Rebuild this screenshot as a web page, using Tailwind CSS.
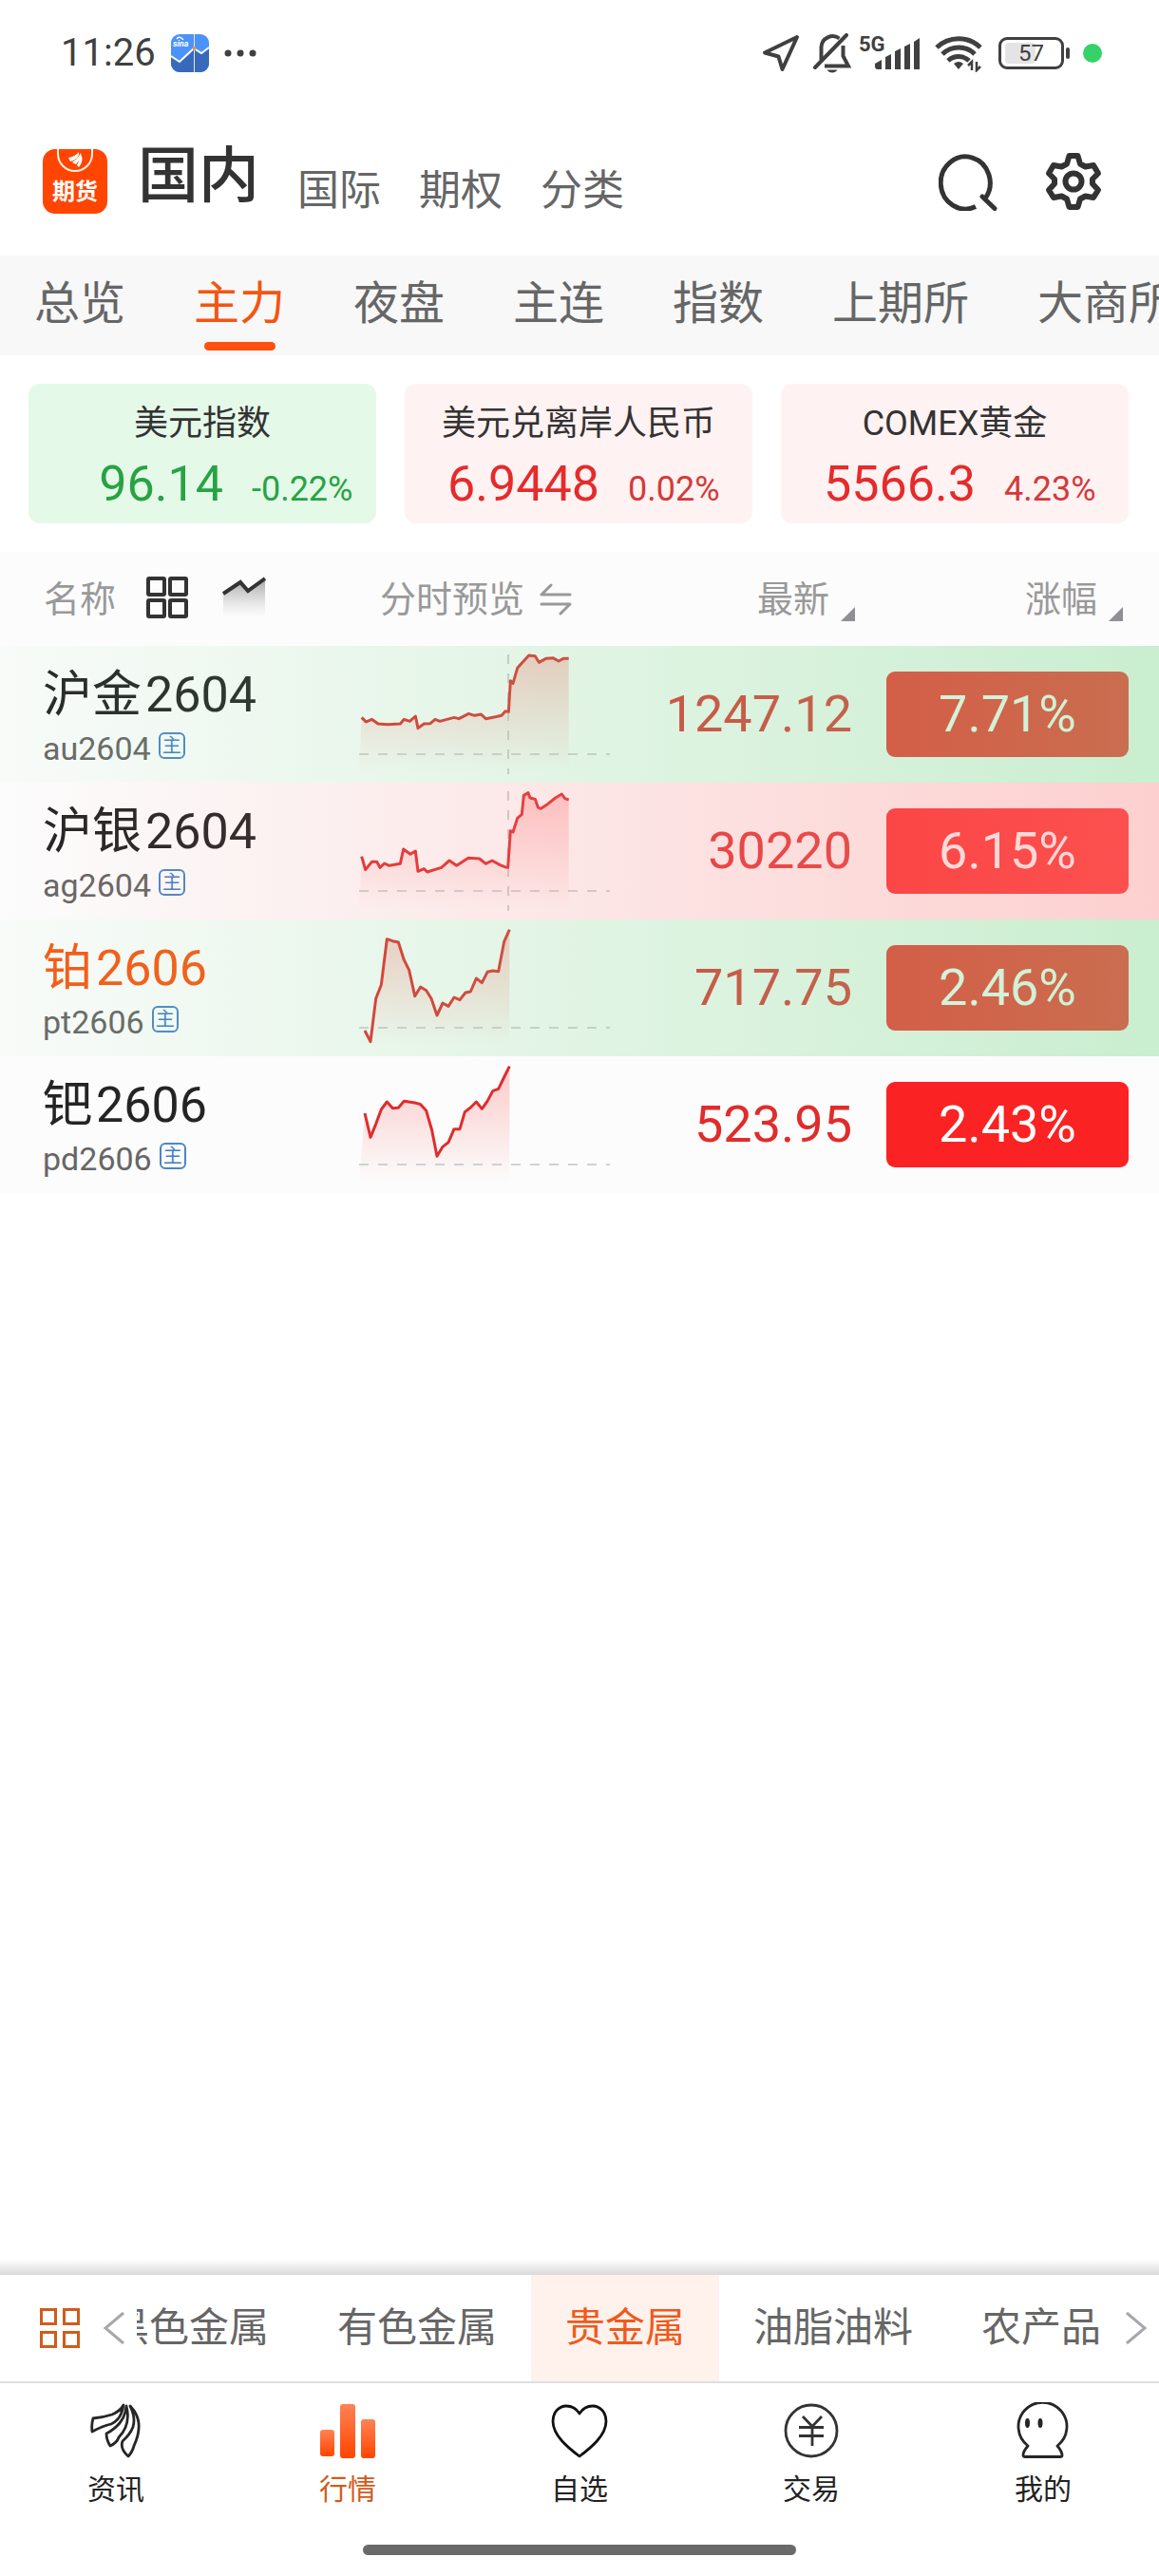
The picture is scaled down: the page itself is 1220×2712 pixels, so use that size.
<!DOCTYPE html>
<html lang="zh-CN">
<head>
<meta charset="utf-8">
<meta name="viewport" content="width=device-width, initial-scale=1">
<title>期货行情</title>
<script src="https://cdn.jsdelivr.net/npm/@tailwindcss/browser@4"></script>
</head>
<body class="flex min-h-screen flex-col overflow-x-hidden bg-white font-[Roboto,'Noto_Sans_CJK_SC',sans-serif] text-[#333]">

<!-- Status bar -->
<div class="flex h-28 items-center pr-[60px] pl-16 text-[#404040]">
  <time class="w-[100px] text-[40px] leading-none">11:26</time>
  <svg class="ml-4 size-10" viewBox="0 0 40 40" aria-hidden="true">
    <rect width="40" height="40" rx="9" fill="#4c92fb"/>
    <path d="M0 23l9 6 15-14 8 5 8-6v17a9 9 0 0 1-9 9H9a9 9 0 0 1-9-9z" fill="#3769bd"/>
    <path d="M0 23l9 6 15-14 8 5 8-6" fill="none" stroke="#fff" stroke-width="2"/>
    <path d="M24.500 0v40" stroke="#f0e6c0" stroke-width="1"/>
    <circle cx="24.500" cy="15" r="2" fill="#e09a3c"/>
    <text x="2" y="13" font-size="9" font-weight="700" font-style="italic" fill="#fff">sina</text>
    <path d="M6 5q2-3 5-1l2 2" fill="none" stroke="#fff" stroke-width="1.500"/>
  </svg>
  <svg class="ml-4 h-2 w-9" viewBox="0 0 36 8" fill="#404040" aria-hidden="true"><circle cx="4" cy="4" r="3.500"/><circle cx="17" cy="4" r="3.500"/><circle cx="30" cy="4" r="3.500"/></svg>
  <div class="ml-auto flex items-center">
    <svg class="size-10" viewBox="0 0 40 40" fill="none" stroke="#404040" stroke-width="4" stroke-linejoin="round" aria-label="定位"><path d="M37 3L3 19.500l14.500 4L21.500 37z"/></svg>
    <svg class="ml-3.5 h-[42px] w-10" viewBox="0 0 40 42" fill="none" stroke="#404040" stroke-width="4" aria-label="静音"><path d="M8.500 28V14.500a12 12 0 0 1 19-9M31.500 13v11l5.500 10.500H12"/><path d="M2 36L35 2" stroke-linecap="round"/><path d="M14.500 38.500h11q-2 3-5.500 3t-5.500-3z" fill="#404040" stroke="none"/></svg>
    <svg class="ml-2 h-9 w-[68px]" viewBox="0 0 68 36" fill="#404040" aria-label="5G"><text x="0" y="16" font-size="22" font-weight="700">5G</text><path d="M17 29l7-4v10h-4a3 3 0 0 1-3-3zM28 22l6-3v16h-6zM38 16l6-3v22h-6zM48 11l6-3v27h-6zM58 6l6-4v33h-6z"/></svg>
    <svg class="ml-3 h-10 w-[51px]" viewBox="0 0 51 40" fill="none" stroke="#404040" stroke-width="5" aria-label="WLAN"><path d="M2 14a33 33 0 0 1 46 0M8 21a24 24 0 0 1 34 0M14 28a16 16 0 0 1 22 0"/><path d="M20 31q5-4 10 0l-5 6z" fill="#404040" stroke="none"/><path d="M39 38V29l-4 4M44 29v9l4-4" stroke-width="2.500"/></svg>
    <div class="ml-4 flex items-center" aria-label="电量 57%">
      <div class="relative h-[34px] w-[69px] overflow-hidden rounded-[9px] border-[3px] border-[#404040]">
        <div class="absolute inset-y-[3px] left-[4px] w-8 rounded-sm bg-[#e4e4e4]"></div>
        <span class="absolute inset-0 text-center text-2xl leading-7">57</span>
      </div>
      <i class="ml-[2px] h-3 w-1 rounded-full bg-[#404040]"></i>
    </div>
    <i class="ml-[14px] size-5 rounded-full bg-[#37d267]"></i>
  </div>
</div>

<!-- Market switcher -->
<header class="flex h-[157px] items-center pr-[60px] pl-[45px]">
  <svg class="size-[68px]" viewBox="0 0 68 68" aria-label="期货">
    <rect width="68" height="68" rx="13" fill="#ff4500"/>
    <path d="M16 0v5a18 18 0 0 0 36 0V0" fill="none" stroke="#fff3e8" stroke-width="2"/>
    <path d="M27 9Q34 8 38 3L38 6Q35 12 29 13zM31 14Q37 10 40 4l1 5-6 7zM36 17l5-10q2 6-3 12z" fill="#fff"/>
    <text x="34" y="53" text-anchor="middle" font-size="24" font-weight="700" fill="#fff" font-family="Noto Sans CJK SC">期货</text>
  </svg>
  <nav class="mb-1 ml-8 flex items-end gap-10 text-[44px] leading-none text-[#666]">
    <a href="#" aria-current="page" class="pb-[5px] text-[64px] leading-none font-medium text-[#333]">国内</a>
    <a href="#">国际</a>
    <a href="#">期权</a>
    <a href="#">分类</a>
  </nav>
  <div class="ml-auto flex gap-[50px]">
    <button aria-label="搜索"><svg class="size-[62px]" viewBox="0 0 62 62" fill="none" stroke="#333" stroke-width="5"><path d="M39 57.500a26 27.500 0 1 1 10-8.500" stroke-linejoin="round"/><path d="M46 47l13 12.500" stroke-linecap="round"/></svg></button>
    <button aria-label="设置"><svg class="size-[60px]" viewBox="0 0 60 60" fill="none" stroke="#333" stroke-width="6" stroke-linejoin="round"><path d="M25.500 3h9L37 11.500l5.500 3L51 13l5 8.500-6 6v5l6 6.500-5 8-8.500-1.500-5.500 3L34.500 57h-9L23 48.500l-5.500-3L9 47l-5-8 6-6.500v-5l-6-6L9 13l8.500 1.500 5.500-3z"/><circle cx="30" cy="30" r="8.500"/></svg></button>
  </div>
</header>

<!-- Exchange tabs -->
<nav class="flex h-[105px] gap-[72px] overflow-hidden bg-[#f8f8f8] pl-9 text-5xl leading-[102px] whitespace-nowrap text-[#666]">
  <a href="#" class="shrink-0">总览</a>
  <a href="#" aria-current="page" class="relative shrink-0 text-[#f4550f]">主力<i class="absolute bottom-[5px] left-[11px] h-[9px] w-[75px] rounded-full bg-[#ff500e]"></i></a>
  <a href="#" class="shrink-0">夜盘</a>
  <a href="#" class="shrink-0">主连</a>
  <a href="#" class="shrink-0">指数</a>
  <a href="#" class="shrink-0">上期所</a>
  <a href="#" class="shrink-0">大商所</a>
</nav>

<main class="flex-1">
  <!-- Index cards -->
  <section class="grid grid-cols-3 gap-[30px] py-[30px] pr-8 pl-[30px]">
    <a href="#" class="rounded-xl bg-[#e5f9e9] pt-5 pb-[11px] text-[#27a343]">
      <h2 class="text-center text-4xl leading-[44px] text-[#333]">美元指数</h2>
      <p class="mt-3 flex h-[60px] items-baseline gap-[30px]"><b class="w-[56%] text-right text-[52px] leading-[60px] font-normal">96.14</b><span class="text-4xl leading-[44px]">-0.22%</span></p>
    </a>
    <a href="#" class="rounded-xl bg-[#fff2f2] pt-5 pb-[11px] text-[#e52b2b]">
      <h2 class="text-center text-4xl leading-[44px] text-[#333]">美元兑离岸人民币</h2>
      <p class="mt-3 flex h-[60px] items-baseline gap-[30px]"><b class="w-[56%] text-right text-[52px] leading-[60px] font-normal">6.9448</b><span class="text-4xl leading-[44px] text-[#d33a3a]">0.02%</span></p>
    </a>
    <a href="#" class="rounded-xl bg-[#fff2f2] pt-5 pb-[11px] text-[#e52b2b]">
      <h2 class="text-center text-4xl leading-[44px] text-[#333]">COMEX黄金</h2>
      <p class="mt-3 flex h-[60px] items-baseline gap-[30px]"><b class="w-[56%] text-right text-[52px] leading-[60px] font-normal">5566.3</b><span class="text-4xl leading-[44px] text-[#d33a3a]">4.23%</span></p>
    </a>
  </section>

  <!-- Shared fill for the intraday charts -->
  <svg class="absolute size-0" aria-hidden="true"><defs><linearGradient id="fade" gradientUnits="userSpaceOnUse" x1="0" y1="0" x2="0" y2="400"><stop offset="0" stop-color="#ff2020" stop-opacity=".25"/><stop offset="1" stop-color="#ff2020" stop-opacity="0"/></linearGradient></defs></svg>

  <table class="w-full table-fixed bg-[#fcfcfc]">
    <colgroup><col class="w-[378px]"><col class="w-[264px]"><col><col class="w-[305px]"></colgroup>
    <thead>
      <tr class="h-[99px] text-[38px] leading-none text-[#999]">
        <th class="p-0 pl-[46px] font-normal">
          <div class="flex items-center"><span>名称</span>
            <button class="mb-1 ml-8" aria-label="宫格"><svg class="size-11" viewBox="0 0 44 44" fill="none" stroke="#333" stroke-width="4"><rect x="2" y="2" width="17" height="17" rx="1"/><rect x="25" y="2" width="17" height="17" rx="1"/><rect x="2" y="25" width="17" height="17" rx="1"/><rect x="25" y="25" width="17" height="17" rx="1"/></svg></button>
            <button class="mb-1 ml-9" aria-label="走势"><svg class="h-11 w-[46px]" viewBox="0 0 46 44"><defs><linearGradient id="g" x2="0" y2="1"><stop stop-color="#999" stop-opacity=".9"/><stop offset="1" stop-color="#ccc" stop-opacity="0"/></linearGradient></defs><path d="M1 18L19 6l8 9L45 2v41H1z" fill="url(#g)"/><path d="M1 18L19 6l8 9L45 2" fill="none" stroke="#333" stroke-width="4"/></svg></button>
          </div>
        </th>
        <th class="p-0 pl-[22px] font-normal"><div class="flex items-center gap-4 whitespace-nowrap">分时预览<svg class="h-[34px] w-[34px]" viewBox="0 0 34 34" fill="none" stroke="#999" stroke-width="3" stroke-linecap="round" stroke-linejoin="round"><path d="M12 2L2 12h30M2 22h30L22 32"/></svg></div></th>
        <th class="p-0 pr-[15px] font-normal"><div class="flex items-end justify-end gap-3">最新<svg class="size-[15px] translate-y-1" viewBox="0 0 15 15"><path d="M15 0v15H0z" fill="#8f8f94"/></svg></div></th>
        <th class="p-0 pr-[38px] font-normal"><div class="flex items-end justify-end gap-3">涨幅<svg class="size-[15px] translate-y-1" viewBox="0 0 15 15"><path d="M15 0v15H0z" fill="#8f8f94"/></svg></div></th>
      </tr>
    </thead>
    <tbody class="text-[54px] leading-none text-[#e02c2c]">
      <tr class="relative h-36">
        <td class="p-0 pt-2 pl-[45px]">
          <div class="text-[52px] leading-[60px] text-[#242424]">沪金<span class="ml-1">2604</span></div>
          <div class="mt-1 flex items-center gap-2 text-[34px] leading-[44px] text-[#666]">au2604<span class="mb-1.5 size-7 rounded-md border-2 border-[#4a86c8] text-center text-xl leading-6 text-[#3f7fc6]">主</span></div>
        </td>
        <td class="p-0"><svg class="block h-36 w-[264px]" viewBox="0 0 792 432" fill="none"><path d="M0 400L8 226 22 240 40 232 60 246 90 248 130 246 142 232 160 238 178 222 186 260 205 246 225 245 240 232 255 238 300 226 315 230 346 214 365 220 385 216 400 230 430 224 450 220 462 206 472 208 478 110 486 118 500 70 512 56 536 30 556 32 568 52 590 40 612 38 630 48 645 40 662 40V400z" fill="url(#fade)"/><path d="M0 342H792M471 27V405" stroke="#c4c4c4" stroke-width="5" stroke-dasharray="30 30"/><path d="M8 226L22 240 40 232 60 246 90 248 130 246 142 232 160 238 178 222 186 260 205 246 225 245 240 232 255 238 300 226 315 230 346 214 365 220 385 216 400 230 430 224 450 220 462 206 472 208 478 110 486 118 500 70 512 56 536 30 556 32 568 52 590 40 612 38 630 48 645 40 662 40" stroke="#e02c2c" stroke-width="9" stroke-linejoin="round"/></svg></td>
        <td class="p-0 pr-[18px] text-right">1247.12</td>
        <td class="p-0 pr-8 pl-[18px]"><button class="block h-[90px] w-full rounded-[9px] bg-[#fa2222] text-center text-white">7.71%</button><i class="pointer-events-none absolute inset-0 bg-[linear-gradient(to_right,rgba(132,218,146,0.03),rgba(132,218,146,0.42))]"></i></td>
      </tr>
      <tr class="relative h-36">
        <td class="p-0 pt-2 pl-[45px]">
          <div class="text-[52px] leading-[60px] text-[#242424]">沪银<span class="ml-1">2604</span></div>
          <div class="mt-1 flex items-center gap-2 text-[34px] leading-[44px] text-[#666]">ag2604<span class="mb-1.5 size-7 rounded-md border-2 border-[#4a86c8] text-center text-xl leading-6 text-[#3f7fc6]">主</span></div>
        </td>
        <td class="p-0"><svg class="block h-36 w-[264px]" viewBox="0 0 792 432" fill="none"><path d="M0 400L8 233 20 275 40 250 56 250 66 268 80 255 95 262 130 256 140 210 162 226 178 216 186 280 205 272 215 282 260 268 285 246 308 262 345 238 380 240 400 256 420 246 445 260 460 266 470 268 478 152 486 156 500 112 514 100 520 40 534 32 540 48 556 52 565 78 574 82 595 68 620 48 640 36 650 50 662 54V400z" fill="url(#fade)"/><path d="M0 342H792M471 27V405" stroke="#c4c4c4" stroke-width="5" stroke-dasharray="30 30"/><path d="M8 233L20 275 40 250 56 250 66 268 80 255 95 262 130 256 140 210 162 226 178 216 186 280 205 272 215 282 260 268 285 246 308 262 345 238 380 240 400 256 420 246 445 260 460 266 470 268 478 152 486 156 500 112 514 100 520 40 534 32 540 48 556 52 565 78 574 82 595 68 620 48 640 36 650 50 662 54" stroke="#e02c2c" stroke-width="9" stroke-linejoin="round"/></svg></td>
        <td class="p-0 pr-[18px] text-right">30220</td>
        <td class="p-0 pr-8 pl-[18px]"><button class="block h-[90px] w-full rounded-[9px] bg-[#fa2222] text-center text-white">6.15%</button><i class="pointer-events-none absolute inset-0 bg-[linear-gradient(to_right,rgba(253,147,145,0),rgba(253,147,145,0.42))]"></i></td>
      </tr>
      <tr class="relative h-36">
        <td class="p-0 pt-2 pl-[45px]">
          <div class="text-[52px] leading-[60px] text-[#fa5712]">铂<span class="ml-1">2606</span></div>
          <div class="mt-1 flex items-center gap-2 text-[34px] leading-[44px] text-[#666]">pt2606<span class="mb-1.5 size-7 rounded-md border-2 border-[#4a86c8] text-center text-xl leading-6 text-[#3f7fc6]">主</span></div>
        </td>
        <td class="p-0"><svg class="block h-36 w-[264px]" viewBox="0 0 792 432" fill="none"><path d="M0 400L18 351 36 386 53 250 70 206 88 62 106 68 124 72 142 128 158 160 176 242 194 213 212 224 228 250 246 303 264 264 282 274 300 246 318 254 336 231 352 228 370 186 388 200 405 166 422 162 440 164 458 70 475 32V400z" fill="url(#fade)"/><path d="M0 342H792" stroke="#c4c4c4" stroke-width="5" stroke-dasharray="30 30"/><path d="M18 351L36 386 53 250 70 206 88 62 106 68 124 72 142 128 158 160 176 242 194 213 212 224 228 250 246 303 264 264 282 274 300 246 318 254 336 231 352 228 370 186 388 200 405 166 422 162 440 164 458 70 475 32" stroke="#e02c2c" stroke-width="9" stroke-linejoin="round"/></svg></td>
        <td class="p-0 pr-[18px] text-right">717.75</td>
        <td class="p-0 pr-8 pl-[18px]"><button class="block h-[90px] w-full rounded-[9px] bg-[#fa2222] text-center text-white">2.46%</button><i class="pointer-events-none absolute inset-0 bg-[linear-gradient(to_right,rgba(132,218,146,0.03),rgba(132,218,146,0.42))]"></i></td>
      </tr>
      <tr class="h-36">
        <td class="p-0 pt-2 pl-[45px]">
          <div class="text-[52px] leading-[60px] text-[#242424]">钯<span class="ml-1">2606</span></div>
          <div class="mt-1 flex items-center gap-2 text-[34px] leading-[44px] text-[#666]">pd2606<span class="mb-1.5 size-7 rounded-md border-2 border-[#4a86c8] text-center text-xl leading-6 text-[#3f7fc6]">主</span></div>
        </td>
        <td class="p-0"><svg class="block h-36 w-[264px]" viewBox="0 0 792 432" fill="none"><path d="M0 400L18 180 36 256 53 214 70 168 88 144 106 164 124 163 142 142 176 147 194 152 212 172 230 234 246 316 264 286 282 272 300 230 318 230 334 176 352 162 370 144 388 166 405 142 422 110 440 103 458 66 475 32V400z" fill="url(#fade)"/><path d="M0 342H792" stroke="#c4c4c4" stroke-width="5" stroke-dasharray="30 30"/><path d="M18 180L36 256 53 214 70 168 88 144 106 164 124 163 142 142 176 147 194 152 212 172 230 234 246 316 264 286 282 272 300 230 318 230 334 176 352 162 370 144 388 166 405 142 422 110 440 103 458 66 475 32" stroke="#e02c2c" stroke-width="9" stroke-linejoin="round"/></svg></td>
        <td class="p-0 pr-[18px] text-right">523.95</td>
        <td class="p-0 pr-8 pl-[18px]"><button class="block h-[90px] w-full rounded-[9px] bg-[#fa2222] text-center text-white">2.43%</button></td>
      </tr>
    </tbody>
  </table>
</main>

<!-- Category strip -->
<div class="h-4 bg-linear-to-b from-white to-[#d9d9d9]"></div>
<nav class="flex h-[114px] items-center border-b-2 border-[#dedede] text-[42px] leading-[112px] text-[#666]">
  <button class="ml-[42px]" aria-label="全部分类"><svg class="size-[42px]" viewBox="0 0 42 42" fill="none" stroke="#d05c1c" stroke-width="3"><rect x="1.500" y="1.500" width="15" height="15"/><rect x="25.500" y="1.500" width="15" height="15"/><rect x="1.500" y="25.500" width="15" height="15"/><rect x="25.500" y="25.500" width="15" height="15"/></svg></button>
  <button class="ml-6" aria-label="向左"><svg class="h-9 w-6" viewBox="0 0 24 36" fill="none" stroke="#a8a8ac" stroke-width="3"><path d="M22 2L3 18l19 16"/></svg></button>
  <div class="ml-3 flex-1 overflow-hidden">
    <div class="-ml-[65px] flex w-max whitespace-nowrap">
      <a href="#" class="px-9">黑色金属</a>
      <a href="#" class="px-9">有色金属</a>
      <a href="#" aria-current="page" class="bg-[#fff1ec] px-9 text-[#ef5a1c]">贵金属</a>
      <a href="#" class="px-9">油脂油料</a>
      <a href="#" class="px-9">农产品</a>
    </div>
  </div>
  <button class="mr-3" aria-label="向右"><svg class="h-9 w-6" viewBox="0 0 24 36" fill="none" stroke="#a8a8ac" stroke-width="3"><path d="M2 2l19 16L2 34"/></svg></button>
</nav>

<!-- Bottom navigation -->
<footer class="pt-5">
  <nav class="grid grid-cols-5 text-3xl leading-10 text-[#222]">
    <a href="#" class="flex flex-col items-center gap-3"><svg class="size-[60px]" viewBox="0 0 60 60" fill="none" stroke="#262626" stroke-width="2.800" stroke-linejoin="round"><path d="M38 3Q35 9 26 13 17 16 6 17 4 24 5 31 16 25 25 23 36 18 38 3z"/><path d="M41 4Q40 15 34 22 28 29 20 33q0 7 4 13 7-3 9-9Q46 24 41 4z"/><path d="M45 4Q51 16 48 26 45 34 37 41q-3 8 6 16 4-4 6-11Q61 20 45 4z"/></svg>资讯</a>
    <a href="#" aria-current="page" class="flex flex-col items-center gap-3 text-[#d05c1c]"><svg class="size-[60px]" viewBox="0 0 60 60"><defs><linearGradient id="bar" x2="0" y2="1"><stop stop-color="#ff8355"/><stop offset="1" stop-color="#ff4500"/></linearGradient></defs><g fill="url(#bar)"><rect x="1" y="29" width="15" height="28" rx="3"/><rect x="22" y="2" width="16" height="57" rx="3"/><rect x="44" y="18" width="15" height="41" rx="3"/></g></svg>行情</a>
    <a href="#" class="flex flex-col items-center gap-3"><svg class="size-[60px]" viewBox="0 0 60 60" fill="none" stroke="#111" stroke-width="2.800" stroke-linejoin="round"><path d="M30 57C18 48 2 35 2 20 2 10 9 4 16 4q9 0 14 8 5-8 14-8c7 0 14 6 14 16 0 15-16 28-28 37z"/></svg>自选</a>
    <a href="#" class="flex flex-col items-center gap-3"><svg class="size-[60px]" viewBox="0 0 60 60" fill="none" stroke="#333" stroke-width="2.800"><circle cx="30" cy="30" r="27"/><path d="M21 15l10 10.500L41 15M31 25v21M17 26.500h26M17 35.500h26"/></svg>交易</a>
    <a href="#" class="flex flex-col items-center gap-3"><svg class="size-[60px]" viewBox="0 0 60 60" fill="none" stroke="#262626" stroke-width="2.800" stroke-linejoin="round"><path d="M14 46A25.500 25.500 0 1 1 45 46Q50 52 50 56q0 1.500-2 1.500H11q-2 0-2-2Q9 52 14 46z"/><ellipse cx="13.500" cy="22" rx="2.500" ry="5" fill="#262626" stroke="none"/><ellipse cx="27" cy="22" rx="2.500" ry="5" fill="#262626" stroke="none"/></svg>我的</a>
  </nav>
  <div class="mx-auto mt-[38px] mb-[22px] h-[11px] w-[456px] rounded-full bg-[#6a6a6a]"></div>
</footer>
</body>
</html>
